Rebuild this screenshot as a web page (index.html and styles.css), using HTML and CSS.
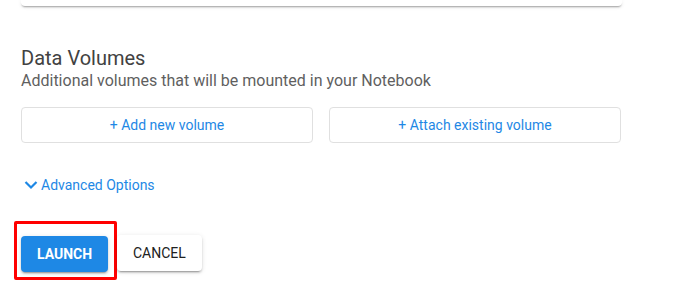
FILE: index.html
```html
<!DOCTYPE html>
<html lang="en">
<head>
    <meta charset="UTF-8">
    <meta name="viewport" content="width=device-width, initial-scale=1.0">
    <title>New Notebook</title>
    <link rel="stylesheet" href="styles.css">
</head>
<body>
    <div class="form">
        <div class="card-end"></div>

        <div class="section">
            <h2>Data Volumes</h2>
            <p class="hint">Additional volumes that will be mounted in your Notebook</p>
            <div class="volume-actions">
                <button class="outline-btn">+ Add new volume</button>
                <button class="outline-btn">+ Attach existing volume</button>
            </div>
        </div>

        <button class="advanced">
            <svg width="14" height="10" viewBox="0 0 14 10"><polyline points="1.5,2 7,7.5 12.5,2" fill="none" stroke="currentColor" stroke-width="2.2"/></svg>
            Advanced Options
        </button>

        <div class="form-actions">
            <div class="highlight">
                <button class="raised-btn primary">LAUNCH</button>
            </div>
            <button class="raised-btn">CANCEL</button>
        </div>
    </div>
</body>
</html>
```

FILE: styles.css
```css
body {
    margin: 0;
    padding: 0;
    background-color: #fff;
    font-family: Roboto, "Liberation Sans", sans-serif;
}
.form {
    width: 600px;
    padding-left: 21px;
}
.card-end {
    height: 6px;
    width: 601px;
    background-color: #fff;
    border-radius: 0 0 4px 4px;
    box-shadow: 0 2px 2px -1px rgba(0, 0, 0, 0.35), 0 1px 4px rgba(0, 0, 0, 0.08);
}
.section {
    margin-top: 40px;
}
.section h2 {
    margin: 0;
    font-size: 20px;
    line-height: 24px;
    font-weight: 400;
    color: #424242;
}
.hint {
    margin: 1px 0 0;
    font-size: 16px;
    line-height: 20px;
    color: #5f5f5f;
}
.volume-actions {
    display: flex;
    gap: 16px;
    margin-top: 16px;
}
.outline-btn {
    flex: 1;
    height: 36px;
    background-color: #fff;
    border: 1px solid #e0e0e0;
    border-radius: 4px;
    color: #1e88e5;
    font-family: inherit;
    font-size: 14px;
    font-weight: 400;
    cursor: pointer;
}
.advanced {
    display: flex;
    align-items: center;
    gap: 3px;
    margin-top: 34px;
    padding: 0 0 0 3px;
    border: none;
    background: none;
    color: #1e88e5;
    font-family: inherit;
    font-size: 14px;
    font-weight: 400;
    cursor: pointer;
}
.form-actions {
    display: flex;
    align-items: flex-start;
    margin-top: 28px;
    margin-left: -7px;
}
.highlight {
    padding: 12px 6px 5px 4px;
    border: 3px solid #f00;
    border-radius: 2px;
}
.raised-btn {
    display: block;
    height: 36px;
    padding: 0 16px;
    min-width: 84px;
    margin-top: 14px;
    border: none;
    border-radius: 4px;
    background-color: #fff;
    color: #212121;
    font-family: inherit;
    font-size: 14px;
    font-weight: 400;
    box-shadow: 0 3px 1px -2px rgba(0, 0, 0, 0.2), 0 2px 2px rgba(0, 0, 0, 0.14), 0 1px 5px rgba(0, 0, 0, 0.12);
    cursor: pointer;
}
.raised-btn.primary {
    width: 87px;
    margin-top: 0;
    background-color: #1e88e5;
    color: #fff;
    font-weight: 700;
}
```
